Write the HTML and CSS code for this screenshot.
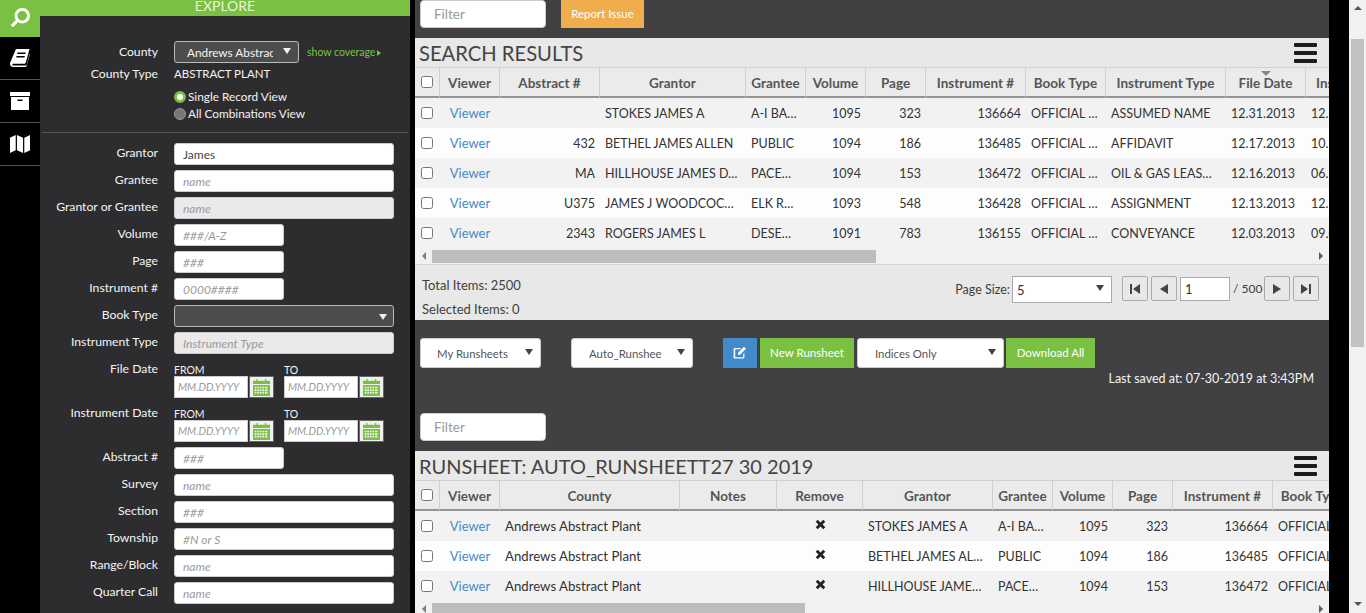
FILE: index.html
```html
<!DOCTYPE html>
<html lang="en">
<head>
<meta charset="utf-8">
<title>Explore</title>
<link rel="stylesheet" href="styles.css">
</head>
<body>
<nav class="rail">
  <a class="rail-item rail-active"><svg class="ico-search" viewBox="0 0 512 512"><path transform="matrix(-1 0 0 1 512 0)" d="M505 442.7L405.3 343c-4.500-4.500-10.600-7-17-7H372c27.600-35.300 44-79.700 44-128C416 93.100 322.900 0 208 0S0 93.100 0 208s93.100 208 208 208c48.300 0 92.700-16.400 128-44v16.300c0 6.400 2.500 12.500 7 17l99.700 99.700c9.400 9.400 24.600 9.400 33.900 0l28.300-28.300c9.400-9.400 9.400-24.600.1-34zM208 336c-70.700 0-128-57.200-128-128 0-70.700 57.200-128 128-128 70.700 0 128 57.200 128 128 0 70.700-57.200 128-128 128z"/></svg></a>
  <a class="rail-item"><svg class="ico-rail" viewBox="0 0 20 18"><path d="M6 0h13.500l-3.600 13.300c-.3 1-1 1.500-2 1.500H3.400c-.8 0-1.200.5-1 1 .2.600.7.800 1.400.8h11.700c.6 0 1-.3 1.200-.8L19.700 4.500l.3.500-3.300 11.700c-.3.900-1 1.300-1.800 1.300H3.300C1.500 18 .2 16.800 0 15c0-.6 0-1 .2-1.500zM7.500 3.500l-.4 1.500h8.300l.4-1.500zM6.600 7l-.4 1.500h8.300l.4-1.500z"/></svg></a>
  <a class="rail-item"><svg class="ico-rail" viewBox="0 0 20 18"><path fill-rule="evenodd" d="M0 0h20v4H0zM1 5h18v13H1zM7.500 7.500v1.500h5V7.500z"/></svg></a>
  <a class="rail-item"><svg class="ico-rail ico-map" viewBox="0 0 21 20"><path d="M0 3.500 6 .5v16l-6 3zM7.300.5l6.400 3v16l-6.400-3zM15 3.500l6-3v16l-6 3z"/></svg></a>
</nav>

<aside class="side">
  <h2 class="side-head">EXPLORE</h2>
  <div class="side-top">
    <div class="row">
      <label class="lbl">County</label>
      <div class="dd dd-county"><span class="dd-text">Andrews Abstract</span><i class="tri"></i></div>
      <a class="cover">show coverage<i class="tri-r"></i></a>
    </div>
    <div class="row-type"><span class="lbl">County Type</span><span class="type-val">ABSTRACT PLANT</span></div>
    <div class="radio-line"><i class="radio on"></i>Single Record View</div>
    <div class="radio-line"><i class="radio"></i>All Combinations View</div>
  </div>
  <hr class="side-rule">
  <form class="side-form">
    <div class="row"><label class="lbl">Grantor</label><input class="fld" value="James"></div>
    <div class="row"><label class="lbl">Grantee</label><input class="fld" placeholder="name"></div>
    <div class="row"><label class="lbl">Grantor or Grantee</label><input class="fld fld-off" placeholder="name"></div>
    <div class="row"><label class="lbl">Volume</label><input class="fld fld-s" placeholder="###/A-Z"></div>
    <div class="row"><label class="lbl">Page</label><input class="fld fld-s" placeholder="###"></div>
    <div class="row"><label class="lbl">Instrument #</label><input class="fld fld-s" placeholder="0000####"></div>
    <div class="row"><label class="lbl">Book Type</label><div class="dd dd-book"><i class="tri"></i></div></div>
    <div class="row"><label class="lbl">Instrument Type</label><input class="fld fld-off" placeholder="Instrument Type"></div>
    <div class="row row-date">
      <label class="lbl">File Date</label>
      <div class="date"><span class="date-cap">FROM</span><div class="date-in"><input class="fld-d" placeholder="MM.DD.YYYY"><button type="button" class="cal"><svg viewBox="0 0 20 20"><use href="#cal"/></svg></button></div></div>
      <div class="date"><span class="date-cap">TO</span><div class="date-in"><input class="fld-d" placeholder="MM.DD.YYYY"><button type="button" class="cal"><svg viewBox="0 0 20 20"><use href="#cal"/></svg></button></div></div>
    </div>
    <div class="row row-date">
      <label class="lbl">Instrument Date</label>
      <div class="date"><span class="date-cap">FROM</span><div class="date-in"><input class="fld-d" placeholder="MM.DD.YYYY"><button type="button" class="cal"><svg viewBox="0 0 20 20"><use href="#cal"/></svg></button></div></div>
      <div class="date"><span class="date-cap">TO</span><div class="date-in"><input class="fld-d" placeholder="MM.DD.YYYY"><button type="button" class="cal"><svg viewBox="0 0 20 20"><use href="#cal"/></svg></button></div></div>
    </div>
    <div class="row"><label class="lbl">Abstract #</label><input class="fld fld-s" placeholder="###"></div>
    <div class="row"><label class="lbl">Survey</label><input class="fld" placeholder="name"></div>
    <div class="row"><label class="lbl">Section</label><input class="fld" placeholder="###"></div>
    <div class="row"><label class="lbl">Township</label><input class="fld" placeholder="#N or S"></div>
    <div class="row"><label class="lbl">Range/Block</label><input class="fld" placeholder="name"></div>
    <div class="row"><label class="lbl">Quarter Call</label><input class="fld" placeholder="name"></div>
  </form>
</aside>

<main class="main">
  <div class="bar-top">
    <input class="filter" placeholder="Filter">
    <button class="btn btn-orange">Report Issue</button>
  </div>

  <section class="panel panel-results">
    <div class="panel-title"><h2>SEARCH RESULTS</h2><i class="burger"><b></b><b></b><b></b></i></div>
    <div class="grid-clip">
      <table class="grid grid-a">
        <colgroup><col class="c25"><col class="c60"><col class="c100"><col class="c146"><col class="c60"><col class="c60"><col class="c60"><col class="c100"><col class="c80"><col class="c120"><col class="c80"><col class="c80"></colgroup>
        <thead><tr><th><input type="checkbox"></th><th>Viewer</th><th>Abstract #</th><th>Grantor</th><th>Grantee</th><th>Volume</th><th>Page</th><th>Instrument #</th><th>Book Type</th><th>Instrument Type</th><th class="sorted">File Date</th><th class="th-left">Instrument Date</th></tr></thead>
        <tbody>
          <tr><td><input type="checkbox"></td><td class="ctr"><a class="link">Viewer</a></td><td class="r"></td><td>STOKES JAMES A</td><td>A-I BA…</td><td class="r">1095</td><td class="r">323</td><td class="r">136664</td><td>OFFICIAL …</td><td>ASSUMED NAME</td><td>12.31.2013</td><td>12.31.2013</td></tr>
          <tr><td><input type="checkbox"></td><td class="ctr"><a class="link">Viewer</a></td><td class="r">432</td><td>BETHEL JAMES ALLEN</td><td>PUBLIC</td><td class="r">1094</td><td class="r">186</td><td class="r">136485</td><td>OFFICIAL …</td><td>AFFIDAVIT</td><td>12.17.2013</td><td>10.17.2013</td></tr>
          <tr><td><input type="checkbox"></td><td class="ctr"><a class="link">Viewer</a></td><td class="r">MA</td><td>HILLHOUSE JAMES D…</td><td>PACE…</td><td class="r">1094</td><td class="r">153</td><td class="r">136472</td><td>OFFICIAL …</td><td>OIL &amp; GAS LEAS…</td><td>12.16.2013</td><td>06.16.2013</td></tr>
          <tr><td><input type="checkbox"></td><td class="ctr"><a class="link">Viewer</a></td><td class="r">U375</td><td>JAMES J WOODCOC…</td><td>ELK R…</td><td class="r">1093</td><td class="r">548</td><td class="r">136428</td><td>OFFICIAL …</td><td>ASSIGNMENT</td><td>12.13.2013</td><td>12.13.2013</td></tr>
          <tr><td><input type="checkbox"></td><td class="ctr"><a class="link">Viewer</a></td><td class="r">2343</td><td>ROGERS JAMES L</td><td>DESE…</td><td class="r">1091</td><td class="r">783</td><td class="r">136155</td><td>OFFICIAL …</td><td>CONVEYANCE</td><td>12.03.2013</td><td>09.03.2013</td></tr>
        </tbody>
      </table>
    </div>
    <div class="hscroll hscroll-a"><i class="ar-l"></i><div class="track"><div class="thumb thumb-a"></div></div><i class="ar-r"></i></div>
    <div class="pager">
      <div class="counts"><div>Total Items: 2500</div><div>Selected Items: 0</div></div>
      <div class="pager-right">
        <span class="pg-label">Page Size:</span>
        <div class="dd dd-size"><span class="dd-text">5</span><i class="tri"></i></div>
        <button class="pg pg-first"><svg viewBox="0 0 12 12"><path d="M1 1h2v10H1zM11 1v10L4 6z"/></svg></button>
        <button class="pg"><svg viewBox="0 0 12 12"><path d="M10 1v10L2 6z"/></svg></button>
        <input class="pg-in" value="1">
        <span class="pg-of">/ 500</span>
        <button class="pg"><svg viewBox="0 0 12 12"><path d="M2 1v10l8-5z"/></svg></button>
        <button class="pg"><svg viewBox="0 0 12 12"><path d="M1 1v10l7-5zM9 1h2v10H9z"/></svg></button>
      </div>
    </div>
  </section>

  <div class="toolbar">
    <div class="dd dd-white dd-my"><span class="dd-text">My Runsheets</span><i class="tri"></i></div>
    <div class="dd dd-white dd-auto"><span class="dd-text">Auto_Runsheet</span><i class="tri"></i></div>
    <button class="btn btn-blue"><svg viewBox="0 0 14 13"><path d="M1.500 2H8L6.800 3.200H2.200v8h8V8l1.200-1.200v4.700c0 .5-.4.900-.9.900H1.500c-.5 0-.9-.4-.9-.9V2.900c0-.5.400-.9.900-.9zM11 .8l2 2-6 6H5v-2z"/></svg></button>
    <button class="btn btn-green btn-new">New Runsheet</button>
    <div class="dd dd-white dd-ind"><span class="dd-text">Indices Only</span><i class="tri"></i></div>
    <button class="btn btn-green btn-dl">Download All</button>
  </div>
  <div class="saved">Last saved at: 07-30-2019 at 3:43PM</div>
  <div class="bar-filter"><input class="filter" placeholder="Filter"></div>

  <section class="panel">
    <div class="panel-title"><h2 class="title-sm">RUNSHEET: AUTO_RUNSHEETT27 30 2019</h2><i class="burger"><b></b><b></b><b></b></i></div>
    <div class="grid-clip">
      <table class="grid grid-b">
        <colgroup><col class="c25"><col class="c60"><col class="c180"><col class="c97"><col class="c86"><col class="c130"><col class="c60"><col class="c60"><col class="c60"><col class="c100"><col class="c80"></colgroup>
        <thead><tr><th><input type="checkbox"></th><th>Viewer</th><th>County</th><th>Notes</th><th>Remove</th><th>Grantor</th><th>Grantee</th><th>Volume</th><th>Page</th><th>Instrument #</th><th>Book Type</th></tr></thead>
        <tbody>
          <tr><td><input type="checkbox"></td><td class="ctr"><a class="link">Viewer</a></td><td class="mix">Andrews Abstract Plant</td><td></td><td class="ctr"><svg class="x" viewBox="0 0 12 12"><path d="M3 .8 6 3.800 9 .8 11.200 3 8.200 6l3 3L9 11.200l-3-3-3 3L.8 9l3-3-3-3z"/></svg></td><td>STOKES JAMES A</td><td>A-I BA…</td><td class="r">1095</td><td class="r">323</td><td class="r">136664</td><td>OFFICIAL PUBLIC</td></tr>
          <tr><td><input type="checkbox"></td><td class="ctr"><a class="link">Viewer</a></td><td class="mix">Andrews Abstract Plant</td><td></td><td class="ctr"><svg class="x" viewBox="0 0 12 12"><path d="M3 .8 6 3.800 9 .8 11.200 3 8.200 6l3 3L9 11.200l-3-3-3 3L.8 9l3-3-3-3z"/></svg></td><td>BETHEL JAMES AL…</td><td>PUBLIC</td><td class="r">1094</td><td class="r">186</td><td class="r">136485</td><td>OFFICIAL PUBLIC</td></tr>
          <tr><td><input type="checkbox"></td><td class="ctr"><a class="link">Viewer</a></td><td class="mix">Andrews Abstract Plant</td><td></td><td class="ctr"><svg class="x" viewBox="0 0 12 12"><path d="M3 .8 6 3.800 9 .8 11.200 3 8.200 6l3 3L9 11.200l-3-3-3 3L.8 9l3-3-3-3z"/></svg></td><td>HILLHOUSE JAME…</td><td>PACE…</td><td class="r">1094</td><td class="r">153</td><td class="r">136472</td><td>OFFICIAL PUBLIC</td></tr>
        </tbody>
      </table>
    </div>
    <div class="hscroll hscroll-b"><i class="ar-l"></i><div class="track"><div class="thumb thumb-b"></div></div><i class="ar-r"></i></div>
  </section>
</main>

<div class="gutter"></div>
<div class="vscroll"><i class="ar-u"></i><div class="vtrack"><div class="vthumb"></div></div><i class="ar-d"></i></div>

<svg class="defs" width="0" height="0"><symbol id="cal" viewBox="0 0 20 20"><path fill="#7ac143" fill-rule="evenodd" d="M4 0h1.500v2H14V0h1.500v2H20v4H0V2h4zM0 7h20v13H0zM2 9v2h2V9zm3 0v2h2V9zm3 0v2h2V9zm3 0v2h2V9zm3 0v2h3V9zM2 12v2h2v-2zm3 0v2h2v-2zm3 0v2h2v-2zm3 0v2h2v-2zm3 0v2h3v-2zM2 15v2h2v-2zm3 0v2h2v-2zm3 0v2h2v-2zm3 0v2h2v-2zm3 0v2h3v-2z"/></symbol></svg>
</body>
</html>
```
FILE: styles.css
```css
* { box-sizing: border-box; }
html, body { height: 100%; margin: 0; overflow: hidden; }
body {
  display: flex;
  width: 1366px;
  height: 613px;
  background: #000;
  font-family: "Lato", "Open Sans", sans-serif;
  font-size: 13px;
  color: #333;
}
.defs { position: absolute; }

/* rail */
.rail { flex: 0 0 40px; background: #000; }
.rail-item {
  display: flex;
  align-items: center;
  justify-content: center;
  height: 43px;
  border-bottom: 1px solid #555;
}
.rail-active { height: 37px; background: #7ac143; border: 0; padding-bottom: 3px; }
.ico-search { width: 19px; height: 19px; fill: #fff; }
.ico-rail { width: 20px; height: 18px; fill: #fff; }
.ico-map { height: 20px; }

/* sidebar */
.side { flex: 0 0 370px; background: #2d2d30; overflow: hidden; color: #fff; }
.side-head {
  margin: 0;
  height: 16px;
  overflow: hidden;
  background: #7ac143;
  color: #e8f5dc;
  font-size: 14px;
  font-weight: 400;
  line-height: 12px;
  text-align: center;
}
.side-top { padding-top: 25px; }
.row { display: flex; align-items: flex-start; gap: 16px; margin-bottom: 5px; min-height: 22px; }
.lbl { flex: 0 0 118px; text-align: right; font-size: 12.200px; line-height: 22px; color: #f4f4f4; white-space: nowrap; }
.side-form .lbl { line-height: 20px; }
.cover { margin-left: -8px; color: #7ac143; font-size: 10.500px; line-height: 23px; white-space: nowrap; }
.tri-r { display: inline-block; margin-left: 2px; border-left: 4px solid #7ac143; border-top: 3px solid transparent; border-bottom: 3px solid transparent; }
.row-type { display: flex; gap: 16px; margin-top: -6px; height: 21px; line-height: 22px; }
.type-val { font-size: 11.500px; color: #f4f4f4; }
.radio-line { display: flex; align-items: center; height: 17px; margin-left: 134px; font-size: 11.800px; color: #f4f4f4; white-space: nowrap; }
.row-type + .radio-line { margin-top: 4px; }
.radio { flex: none; width: 12px; height: 12px; margin-right: 2px; border-radius: 50%; background: #777; border: 1px solid #999; }
.radio.on { background: #7ac143; border: 3px solid #7ac143; }
.radio.on::after { content: ""; display: block; width: 6px; height: 6px; border-radius: 50%; background: #fff; }
.side-rule { height: 1px; margin: 10px 2px 10px; border: 0; background: #555; }

.fld {
  flex: 0 0 220px;
  width: 220px;
  height: 22px;
  padding: 0 8px;
  border: 1px solid #ccc;
  border-radius: 3px;
  background: #fff;
  font: 400 12px "Lato", sans-serif;
  color: #444;
}
.fld::placeholder, .fld-d::placeholder { color: #999; font-style: italic; opacity: 1; }
.fld-s { flex-basis: 110px; width: 110px; }
.fld-off { background: #eaeaea; }

.dd { position: relative; display: flex; align-items: center; border-radius: 3px; white-space: nowrap; }
.dd-text { display: block; overflow: hidden; }
.tri { position: absolute; border-left: 4px solid transparent; border-right: 4px solid transparent; border-top: 6px solid currentColor; }
.dd-county { flex: 0 0 125px; height: 22px; padding-left: 12px; background: #4d4d4d; border: 1px solid #bbb; color: #f4f4f4; font-size: 11.800px; }
.dd-county .dd-text { width: 86px; }
.dd-county .tri { right: 7px; top: 6px; }
.dd-book { flex: 0 0 220px; height: 22px; background: #4d4d4d; border: 1px solid #bbb; color: #eee; }
.dd-book .tri { right: 6px; top: 8px; }

.row-date { gap: 16px; margin-bottom: 5px; }
.date { flex: 0 0 110px; }
.row-date .date + .date { margin-left: -16px; }
.date-cap { display: block; height: 17px; padding-top: 5px; font-size: 10.500px; font-weight: 400; line-height: 12px; color: #f4f4f4; }
.date-in { display: flex; gap: 1px; }
.fld-d { width: 74px; height: 22px; padding: 0 3px; border: 1px solid #ccc; background: #fff; font: 400 10.500px "Lato", sans-serif; }
.cal { display: flex; align-items: center; justify-content: center; width: 25px; height: 22px; padding: 0; border: 1px solid #666; background: #f0f0f0; }
.cal svg { width: 17px; height: 17px; }

/* main */
.main { flex: 0 0 914px; margin-left: 5px; background: #414143; overflow: hidden; }
.bar-top { display: flex; gap: 15px; height: 38px; padding-left: 5px; }
.filter { width: 126px; height: 28px; padding: 0 13px; border: 1px solid #ccc; border-radius: 4px; background: #fff; font: 400 13.500px "Lato", sans-serif; }
.filter::placeholder { color: #999; opacity: 1; }
.btn { height: 30px; padding: 0 0 2px; border: 0; color: #fff; font: 400 11.500px "Lato", sans-serif; white-space: nowrap; }
.btn-orange { width: 83px; height: 28px; background: #f0ad4e; }
.btn-blue { display: flex; align-items: center; justify-content: center; width: 34px; background: #428bca; }
.btn-blue svg { width: 14px; height: 13px; fill: #fff; }
.btn-green { background: #7ac143; }

.panel { background: #e8e8e8; }
.panel-results { height: 282px; }
.panel-title { display: flex; align-items: center; justify-content: space-between; height: 29px; padding: 0 12px 0 4px; }
.panel-title h2 { margin: 0; font-size: 20.200px; font-weight: 400; color: #444; white-space: nowrap; }
.panel-title .title-sm { font-size: 20px; }
.burger { display: flex; flex-direction: column; gap: 4px; width: 23px; }
.burger b { display: block; height: 4px; border-radius: 1px; background: #1c1c1c; }
.grid-clip { overflow: hidden; }
.grid { table-layout: fixed; border-collapse: separate; border-spacing: 0; }
.grid-a { width: 971px; }
.grid-b { width: 938px; }
.c25 { width: 25px; } .c60 { width: 60px; } .c80 { width: 80px; } .c86 { width: 86px; } .c97 { width: 97px; }
.c100 { width: 100px; } .c120 { width: 120px; } .c130 { width: 130px; } .c146 { width: 146px; } .c180 { width: 180px; }
.grid th {
  position: relative;
  height: 31px;
  padding: 2px 1px 0;
  border-top: 1px solid #d0d0d0;
  border-right: 1px solid #d0d0d0;
  border-bottom: 2px solid #949494;
  background: #ebebeb;
  color: #555;
  font-size: 13.500px;
  font-weight: 700;
  text-align: center;
  white-space: nowrap;
  overflow: hidden;
}
.grid .th-left { text-align: left; padding-left: 10px; }
.sorted::before { content: ""; position: absolute; left: 50%; top: 3px; margin-left: -5px; border-left: 5px solid transparent; border-right: 5px solid transparent; border-top: 5px solid #888; }
.grid td { height: 30px; padding: 0 5px; font-size: 12.500px; color: #333; white-space: nowrap; overflow: hidden; background: #f2f2f2; }
.grid tbody tr:nth-child(even) td { background: #fdfdfd; }
.grid th:first-child, .grid td:first-child { padding: 0 0 0 6px; text-align: left; }
.grid input[type="checkbox"] { display: block; margin: 0; width: 12px; height: 12px; }
.grid td.mix { font-size: 13.200px; }
.r { text-align: right; }
.ctr { text-align: center; }
.link { color: #428bca; font-size: 13px; }
.x { display: block; width: 11px; height: 11px; margin: -3px auto 0; fill: #222; }

.hscroll { display: flex; align-items: flex-start; background: #f1f1f1; }
.hscroll-a { height: 17px; border-bottom: 1px solid #d4d4d4; }
.hscroll-b { height: 12px; }
.track { flex: 1; height: 13px; margin-top: 2px; overflow: hidden; }
.thumb { height: 100%; background: #bdbdbd; }
.thumb-a { width: 444px; }
.thumb-b { width: 373px; }
.ar-l, .ar-r { flex: 0 0 17px; display: flex; justify-content: center; margin-top: 4px; }
.ar-l::before { content: ""; border-right: 4px solid #7d7d7d; border-top: 4px solid transparent; border-bottom: 4px solid transparent; }
.ar-r::before { content: ""; border-left: 4px solid #5a5a5a; border-top: 4px solid transparent; border-bottom: 4px solid transparent; }

.pager { display: flex; justify-content: space-between; height: 55px; padding: 8px 10px 0 7px; color: #3f3f3f; }
.counts { line-height: 24px; font-size: 13px; }
.pager-right { display: flex; align-items: flex-start; gap: 3px; margin-top: 3px; font-size: 12.500px; }
.pg-label { line-height: 28px; margin-right: -1px; white-space: nowrap; }
.dd-size { width: 100px; height: 27px; margin-right: 7px; padding-left: 4px; border: 1px solid #aaa; border-radius: 0; background: #fff; color: #333; font-size: 13px; }
.dd-size .tri { right: 7px; top: 8px; color: #444; }
.pg { display: flex; align-items: center; justify-content: center; width: 26px; height: 25px; padding: 0; border: 1px solid #aaa; border-radius: 2px; background: #e8e8e8; }
.pg svg { width: 12px; height: 12px; fill: #444; }
.pg-in { width: 50px; height: 24px; margin-top: 1px; padding: 0 4px; border: 1px solid #aaa; background: #fff; font: 400 13px "Lato", sans-serif; color: #333; }
.pg-of { width: 28px; font-size: 12px; line-height: 25px; white-space: nowrap; }

.toolbar { display: flex; align-items: flex-start; height: 40px; padding: 18px 0 0 5px; box-sizing: content-box; }
.dd-white { height: 30px; background: #fff; border: 1px solid #ccc; color: #555; font-size: 11.400px; }
.dd-white .tri { top: 10px; right: 7px; color: #444; }
.dd-my { width: 121px; padding-left: 16px; margin-right: 30px; }
.dd-auto { width: 122px; padding-left: 17px; margin-right: 30px; }
.dd-auto .dd-text { width: 73px; }
.dd-ind { width: 147px; padding-left: 17px; margin-right: 2px; }
.btn-new { width: 94px; margin: 0 3px; }
.btn-dl { width: 89px; }
.saved { height: 0; margin-top: -8px; padding-right: 15px; text-align: right; color: #f4f4f4; font-size: 12.500px; line-height: 18px; }
.bar-filter { height: 38px; margin-top: 43px; padding-left: 5px; }

.gutter { flex: 0 0 20px; background: #000; }
.vscroll { display: flex; flex: 0 0 17px; flex-direction: column; align-items: center; background: #f1f1f1; }
.vtrack { flex: 1; width: 13px; }
.vthumb { height: 308px; background: #c1c1c1; }
.ar-u, .ar-d { flex: none; height: 39px; display: flex; justify-content: center; padding-top: 6px; }
.ar-d { height: 17px; padding-top: 6px; }
.ar-u::before { content: ""; height: 0; border-left: 4px solid transparent; border-right: 4px solid transparent; border-bottom: 4px solid #555; }
.ar-d::before { content: ""; height: 0; border-left: 4px solid transparent; border-right: 4px solid transparent; border-top: 4px solid #555; }
```
